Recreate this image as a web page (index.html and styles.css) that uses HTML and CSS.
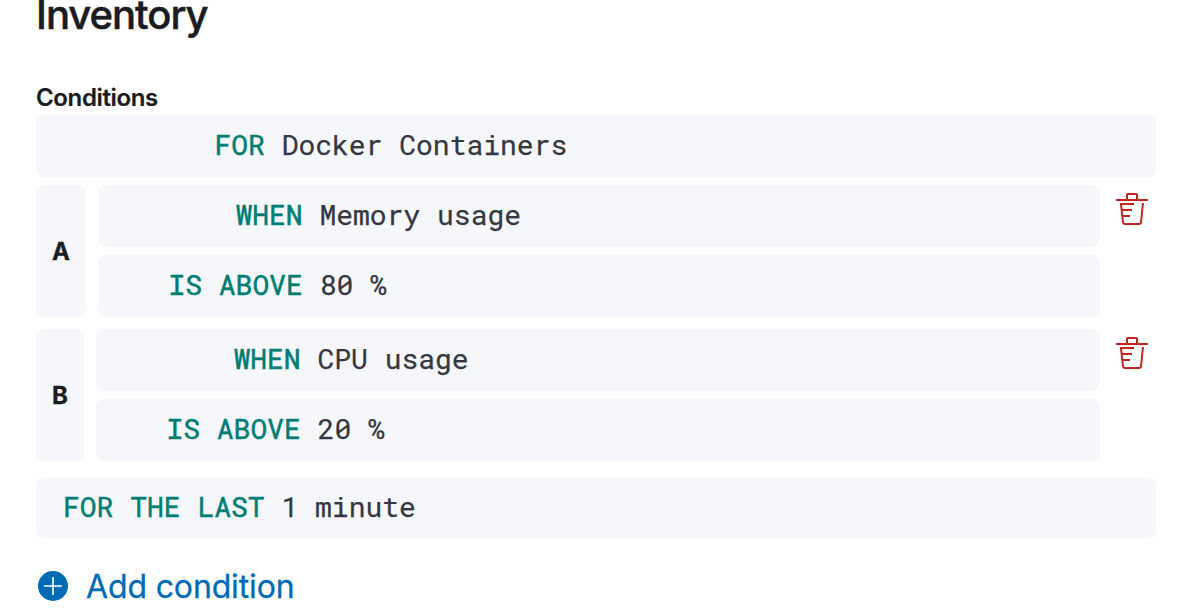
FILE: index.html
```html
<!DOCTYPE html>
<html lang="en">
<head>
<meta charset="utf-8">
<title>Inventory</title>
<link rel="stylesheet" href="styles.css">
</head>
<body>
<main class="page">
  <h1 class="title">Inventory</h1>
  <h2 class="label">Conditions</h2>
  <div class="expression source"><span class="keyword">FOR</span> <span class="value">Docker Containers</span></div>
  <section class="condition first">
    <div class="letter">A</div>
    <div class="rows">
      <div class="expression"><span class="keyword">WHEN</span> <span class="value">Memory usage</span></div>
      <div class="expression threshold"><span class="keyword">IS ABOVE</span> <span class="value">80 %</span></div>
    </div>
    <button class="delete" aria-label="Delete condition A"><svg width="32" height="32" viewBox="0 0 32 32" fill="none" stroke="#bd271e" stroke-width="2"><path d="M0 7h32M11 7V2q0-1 1-1h8q1 0 1 1v5M18 11H5l2 18q.2 2 2 2h14q1.8 0 2-2l2-19M6 17h10M7 23h7"/></svg></button>
  </section>
  <section class="condition second">
    <div class="letter">B</div>
    <div class="rows">
      <div class="expression"><span class="keyword">WHEN</span> <span class="value">CPU usage</span></div>
      <div class="expression threshold"><span class="keyword">IS ABOVE</span> <span class="value">20 %</span></div>
    </div>
    <button class="delete" aria-label="Delete condition B"><svg width="32" height="32" viewBox="0 0 32 32" fill="none" stroke="#bd271e" stroke-width="2"><path d="M0 7h32M11 7V2q0-1 1-1h8q1 0 1 1v5M18 11H5l2 18q.2 2 2 2h14q1.8 0 2-2l2-19M6 17h10M7 23h7"/></svg></button>
  </section>
  <div class="expression duration"><span class="keyword">FOR THE LAST</span> <span class="value">1 minute</span></div>
  <button class="add"><svg width="30" height="30" viewBox="0 0 30 30"><circle cx="15" cy="15" r="15" fill="#006bb4"/><path d="M15 6v18M6 15h18" stroke="#fff" stroke-width="1.6"/></svg><span>Add condition</span></button>
</main>
</body>
</html>
```
FILE: styles.css
```css
* { box-sizing: border-box; }
body { margin: 0; background: #fff; color: #1a1c21; font-family: Inter, sans-serif; }
.page { width: 1156px; height: 616px; padding-left: 36px; display: flow-root; }
.title { margin: -7px 0 0; height: 87px; font-size: 40px; line-height: 44px; font-weight: 500; letter-spacing: -1px; -webkit-text-stroke: .5px; }
.label { margin: 0; height: 35px; line-height: 36px; font-size: 24px; font-weight: 600; letter-spacing: -.36px; -webkit-text-stroke: .2px; }
.expression { height: 62px; padding-left: 137.4px; border-radius: 8px; background: #f5f7fb; color: #343741; font: 28px/59px "Roboto Mono", "DejaVu Sans Mono", monospace; white-space: pre; -webkit-text-stroke: .25px; }
.keyword { color: #017d73; -webkit-text-stroke: .5px; }
.source { padding-left: 178.4px; }
.condition { display: flex; gap: 12px; height: 132px; margin-top: 8px; }
.letter { width: 50px; border-radius: 8px; background: #f5f7fb; display: grid; place-items: center; font-size: 24px; font-weight: 700; -webkit-text-stroke: .3px; }
.rows { flex: 1; display: grid; gap: 8px; }
.threshold { padding-left: 70.4px; }
.second { margin-top: 12px; }
.second .letter { width: 48px; }
.delete { width: 32px; height: 32px; margin: 8px 8px 0 4px; padding: 0; border: 0; background: none; }
.delete svg, .add svg { display: block; }
.duration { margin-top: 16px; padding-left: 27px; }
.add { display: flex; align-items: center; gap: 18px; height: 48px; margin: 23px 0 0 2px; padding: 0; border: 0; background: none; color: #006bb4; font: 32px Inter, sans-serif; letter-spacing: -.14px; -webkit-text-stroke: .3px; }
```
